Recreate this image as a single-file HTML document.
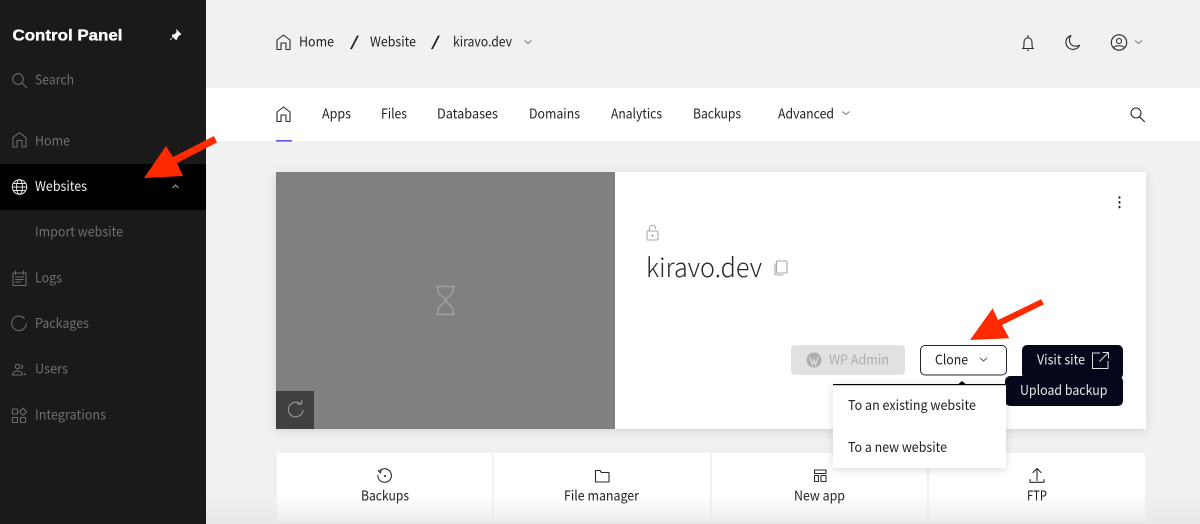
<!DOCTYPE html>
<html lang="en"><head><meta charset="utf-8"><title>Control Panel</title>
<style>
html,body{margin:0;padding:0;width:1200px;height:524px;overflow:hidden;background:#f1f1f1}
svg{display:block}
text{font-family:"Noto Sans CJK JP","Liberation Sans",sans-serif;font-size:13.6px;fill:#222}
.s{fill:#6f6f6f}
.i{fill:none;stroke:#2a2a2a;stroke-width:1.1;stroke-linecap:round;stroke-linejoin:round}
.d{fill:none;stroke:#6a6a6a;stroke-width:1.1;stroke-linecap:round;stroke-linejoin:round}
</style></head><body>
<svg width="1200" height="524" viewBox="0 0 1200 524" xmlns="http://www.w3.org/2000/svg">
<defs>
<filter id="sh" x="-5%" y="-10%" width="110%" height="125%"><feDropShadow dx="0" dy="2" stdDeviation="5" flood-color="#000" flood-opacity=".13"/></filter>
<filter id="sh2" x="-15%" y="-15%" width="130%" height="135%"><feDropShadow dx="0" dy="2" stdDeviation="4" flood-color="#000" flood-opacity=".14"/></filter>
<linearGradient id="fade" x1="0" y1="0" x2="0" y2="1"><stop offset="0" stop-color="#e6e6e6" stop-opacity="0"/><stop offset="1" stop-color="#e6e6e6" stop-opacity=".75"/></linearGradient>
</defs>
<rect width="1200" height="524" fill="#f1f1f1"/>
<rect x="206" y="88" width="994" height="53" fill="#fff"/>
<rect x="276" y="140" width="16" height="1.6" fill="#5b5ce6"/>

<!-- sidebar -->
<rect width="206" height="524" fill="#1a1a1a"/>
<rect y="164" width="206" height="46" fill="#000"/>
<text x="12.500" y="40.500" textLength="110" lengthAdjust="spacingAndGlyphs" style="font-family:'Liberation Sans',sans-serif;font-size:15.500px;font-weight:700;fill:#fff;stroke:#fff;stroke-width:.35">Control Panel</text>
<path d="M176.500 29.800l4.500 4.500-1.400.5-2.400 2.500-.2 2-1.200.3-3.600-3.600.3-1.200 2-.2 2.500-2.400zM172.500 37.500l-2.500 2.500" fill="#fff" stroke="#fff" stroke-width=".6"/>
<circle cx="18" cy="79" r="5.300" class="d"/><path d="M22 83l4.600 4.600" class="d"/>
<text x="35" y="84.500" textLength="39" lengthAdjust="spacingAndGlyphs" class="s">Search</text>
<path d="M13 147v-9.500l6.500-4.800 6.500 4.800v9.500h-4v-6.500h-5v6.500z" class="d"/>
<text x="35" y="145.500" textLength="35" lengthAdjust="spacingAndGlyphs" class="s">Home</text>
<g fill="none" stroke="#e6e6e6" stroke-width="1"><circle cx="19.500" cy="187" r="7.200"/><ellipse cx="19.500" cy="187" rx="3" ry="7.200"/><path d="M12.300 187h14.400M13.500 183.500h12M13.500 190.500h12"/></g>
<text x="35" y="191" textLength="52" lengthAdjust="spacingAndGlyphs" style="fill:#eee">Websites</text>
<path d="M172.500 188l3-3 3 3" fill="none" stroke="#aaa" stroke-width="1"/>
<text x="35" y="236.500" textLength="88" lengthAdjust="spacingAndGlyphs" class="s">Import website</text>
<g class="d"><rect x="13" y="273" width="13" height="12.500"/><path d="M15.500 271v3.500M23.500 271v3.500M15.500 277h8M15.500 279.500h8M15.500 282h5"/></g>
<text x="35" y="282.500" textLength="27" lengthAdjust="spacingAndGlyphs" class="s">Logs</text>
<path d="M24.500 318.500a7.300 7.300 0 1 0 1.800 5 M21.500 316.800a7.300 7.300 0 0 1 2 1" class="d"/>
<text x="35" y="328" textLength="54" lengthAdjust="spacingAndGlyphs" class="s">Packages</text>
<g class="d"><circle cx="17.500" cy="366.500" r="2.200"/><path d="M12.500 375c0-1 .5-4 5-4s5 3 5 4zM21.500 365c1.500 1 1.500 2.500 0 3.500"/></g><path d="M24.500 372.500l2 2.500h-2.500z" fill="#6a6a6a"/>
<text x="35" y="373.500" textLength="33" lengthAdjust="spacingAndGlyphs" class="s">Users</text>
<g class="d"><rect x="12.500" y="409" width="5" height="5"/><rect x="12.500" y="417.500" width="5" height="5"/><rect x="20.500" y="417.500" width="5" height="5"/><path d="M23 408.200l3.500 3.500-3.500 3.500-3.500-3.500z"/></g>
<text x="35" y="419.500" textLength="71" lengthAdjust="spacingAndGlyphs" class="s">Integrations</text>

<!-- breadcrumb -->
<path d="M277 49.500v-9.500l6.500-5 6.500 5v9.500h-4v-6.500h-5v6.500z" class="i"/>
<text x="299" y="46.500" textLength="35" lengthAdjust="spacingAndGlyphs">Home</text>
<text x="350" y="46.500" textLength="9" lengthAdjust="spacingAndGlyphs" style="stroke:#222;stroke-width:.25">/</text>
<text x="370" y="46.500" textLength="46" lengthAdjust="spacingAndGlyphs">Website</text>
<text x="431" y="46.500" textLength="9" lengthAdjust="spacingAndGlyphs" style="stroke:#222;stroke-width:.25">/</text>
<text x="453" y="46.500" textLength="59" lengthAdjust="spacingAndGlyphs">kiravo.dev</text>
<path d="M524.500 40.500l3.500 3 3.500-3" fill="none" stroke="#777" stroke-width="1"/>
<g class="i" style="stroke-width:1.100"><path d="M1023.500 48.500c.4-1.500.5-3.500.5-6 0-2.500 1.500-4.500 4-4.800 2.500.3 4 2.300 4 4.800 0 2.500.1 4.500.5 6zM1022.500 48.500h11M1028 35.500v1.500M1027.500 50.300h1"/>
<path d="M1071 35.500c-4 1.500-5.500 4.500-5 8 .6 4 4.500 6.500 8.200 5.800 2.500-.4 4.500-2 5.300-4-4.500 2.200-9.200.2-10-4-.3-2 .1-4 1.500-5.800z"/>
<circle cx="1119" cy="42.500" r="7.700"/><circle cx="1119" cy="41" r="2.500"/><path d="M1113.500 48c1-3 10-3 11 0"/></g>
<path d="M1135 40.500l3.500 3 3.500-3" fill="none" stroke="#777" stroke-width="1"/>

<!-- tabs -->
<path d="M277 121.500v-9.500l6.500-5 6.500 5v9.500h-4v-6.500h-5v6.500z" class="i"/>
<text x="322" y="118.500" textLength="29" lengthAdjust="spacingAndGlyphs">Apps</text>
<text x="381" y="118.500" textLength="26" lengthAdjust="spacingAndGlyphs">Files</text>
<text x="437" y="118.500" textLength="61" lengthAdjust="spacingAndGlyphs">Databases</text>
<text x="529" y="118.500" textLength="51" lengthAdjust="spacingAndGlyphs">Domains</text>
<text x="611" y="118.500" textLength="51" lengthAdjust="spacingAndGlyphs">Analytics</text>
<text x="693" y="118.500" textLength="48" lengthAdjust="spacingAndGlyphs">Backups</text>
<text x="778" y="118.500" textLength="56" lengthAdjust="spacingAndGlyphs">Advanced</text>
<path d="M842.500 111.500l3.500 3 3.500-3" fill="none" stroke="#777" stroke-width="1"/>
<circle cx="1136" cy="113" r="5" class="i"/><path d="M1139.500 116.700l5 5" class="i"/>

<!-- main card -->
<rect x="276" y="172" width="870" height="257" fill="#fff" filter="url(#sh)"/>
<rect x="276" y="172" width="339" height="257" fill="#808080"/>
<rect x="276" y="391" width="38" height="38" fill="#404040"/>
<path d="M301 404.500a7.300 7.300 0 1 0 2 5.500M297 404h4.700v-4.300" fill="none" stroke="#9a9a9a" stroke-width="1.100"/>
<path d="M436 286.500h19M436 314.500h19M438 287v4c0 4 7 6 7 9.500s-7 5-7 9.500v4.500M453 287v4c0 4-7 6-7 9.500s7 5 7 9.500v4.500" fill="none" stroke="#a0a0a0" stroke-width="1.500"/>
<path d="M1119.500 197.200v.6M1119.500 202v.6M1119.500 206.800v.6" stroke="#222" stroke-width="2" stroke-linecap="round"/>
<g fill="none" stroke="#a8a8a8" stroke-width="1.100"><rect x="647" y="231" width="11" height="9" rx="1"/><path d="M649.500 231v-3c0-3.500 6-3.500 6 0v1"/></g><circle cx="652.500" cy="235.500" r="1" fill="#888"/>
<text x="646" y="277" textLength="116" lengthAdjust="spacingAndGlyphs" style="font-size:26px;font-weight:300;fill:#2a2a2a">kiravo.dev</text>
<g fill="none" stroke="#a8a8a8" stroke-width="1.100"><rect x="776.500" y="261" width="10.500" height="12" rx="1"/><path d="M775 263.500v10c0 1 .5 1.500 1.500 1.500h7"/></g>

<!-- buttons -->
<rect x="791" y="345" width="114" height="30" rx="4" fill="#e1e1e1"/>
<circle cx="814" cy="360" r="7.500" fill="#adadad"/><path d="M809.500 356.800l3 8 1.500-5 1.500 5 3-8" fill="none" stroke="#e1e1e1" stroke-width="1.200"/>
<text x="829" y="364.500" textLength="60" lengthAdjust="spacingAndGlyphs" style="fill:#adadad">WP Admin</text>
<rect x="920.500" y="345.500" width="86" height="29.500" rx="4.500" fill="#fff" stroke="#20222c" stroke-width="1"/>
<text x="935" y="364.500" textLength="33" lengthAdjust="spacingAndGlyphs">Clone</text>
<path d="M980 358l3.500 3 3.500-3" fill="none" stroke="#555" stroke-width="1"/>
<rect x="1022" y="345" width="101" height="34" rx="5" fill="#05081a"/>
<text x="1037" y="364.500" textLength="48" lengthAdjust="spacingAndGlyphs" style="fill:#e8e8e8">Visit site</text>
<path d="M1100 353h-7.500v15.500h15.500V361M1099.500 361.500l8.500-8.500M1102.500 352.500h6v6" fill="none" stroke="#ddd" stroke-width="1"/>
<rect x="1005" y="376" width="118" height="30" rx="5" fill="#05081a"/>
<text x="1020" y="395" textLength="87.500" lengthAdjust="spacingAndGlyphs" style="fill:#e8e8e8">Upload backup</text>

<!-- tiles -->
<rect x="277" y="453" width="215" height="68" fill="#fff"/>
<rect x="494" y="453" width="216" height="68" fill="#fff"/>
<rect x="712" y="453" width="215" height="68" fill="#fff"/>
<rect x="929" y="453" width="216" height="68" fill="#fff"/>
<rect x="206" y="495" width="994" height="29" fill="url(#fade)"/>
<g class="i">
<path d="M380 470.500a6.800 6.800 0 1 1-2.200 5M378.300 470.500l2 2.500 1-3.300"/>
<path d="M595.500 482h13.500v-9.500h-7.500l-1.500-2h-4.500z"/>
<path d="M1037 468.500v12M1033 472.500l4-4 4 4M1030 479.500v2.800h14v-2.800"/>
</g>
<circle cx="385" cy="476" r="1" fill="#222"/>
<text x="361" y="500.500" textLength="48" lengthAdjust="spacingAndGlyphs">Backups</text>
<text x="564" y="500.500" textLength="75" lengthAdjust="spacingAndGlyphs">File manager</text>
<text x="794" y="500.500" textLength="51" lengthAdjust="spacingAndGlyphs">New app</text>
<text x="1027" y="500.500" textLength="20" lengthAdjust="spacingAndGlyphs">FTP</text>
<g class="i" style="stroke-width:1.100"><rect x="814.500" y="470" width="11.500" height="3.500"/><rect x="814.500" y="475.500" width="4" height="6"/><path d="M821 475.500h5v6h-5z"/></g>

<!-- dropdown -->
<rect x="833" y="384" width="173" height="84" fill="#fff" filter="url(#sh2)"/>
<rect x="833" y="384" width="173" height="1.200" fill="#000"/>
<path d="M958.500 384l3.500-3 3.500 3z" fill="#000"/>
<text x="848" y="410" textLength="128" lengthAdjust="spacingAndGlyphs">To an existing website</text>
<text x="848" y="452" textLength="99" lengthAdjust="spacingAndGlyphs">To a new website</text>

<!-- arrows -->
<path d="M217 142.500L214 136 173 157 166 146 144 178 183 176 177 163z" fill="#ff2a00"/>
<path d="M1044 304.300L1041 299.300 998 320 992.700 308.300 970 340 1009.300 338.300 1002 325z" fill="#ff2a00"/>
</svg>
</body></html>
